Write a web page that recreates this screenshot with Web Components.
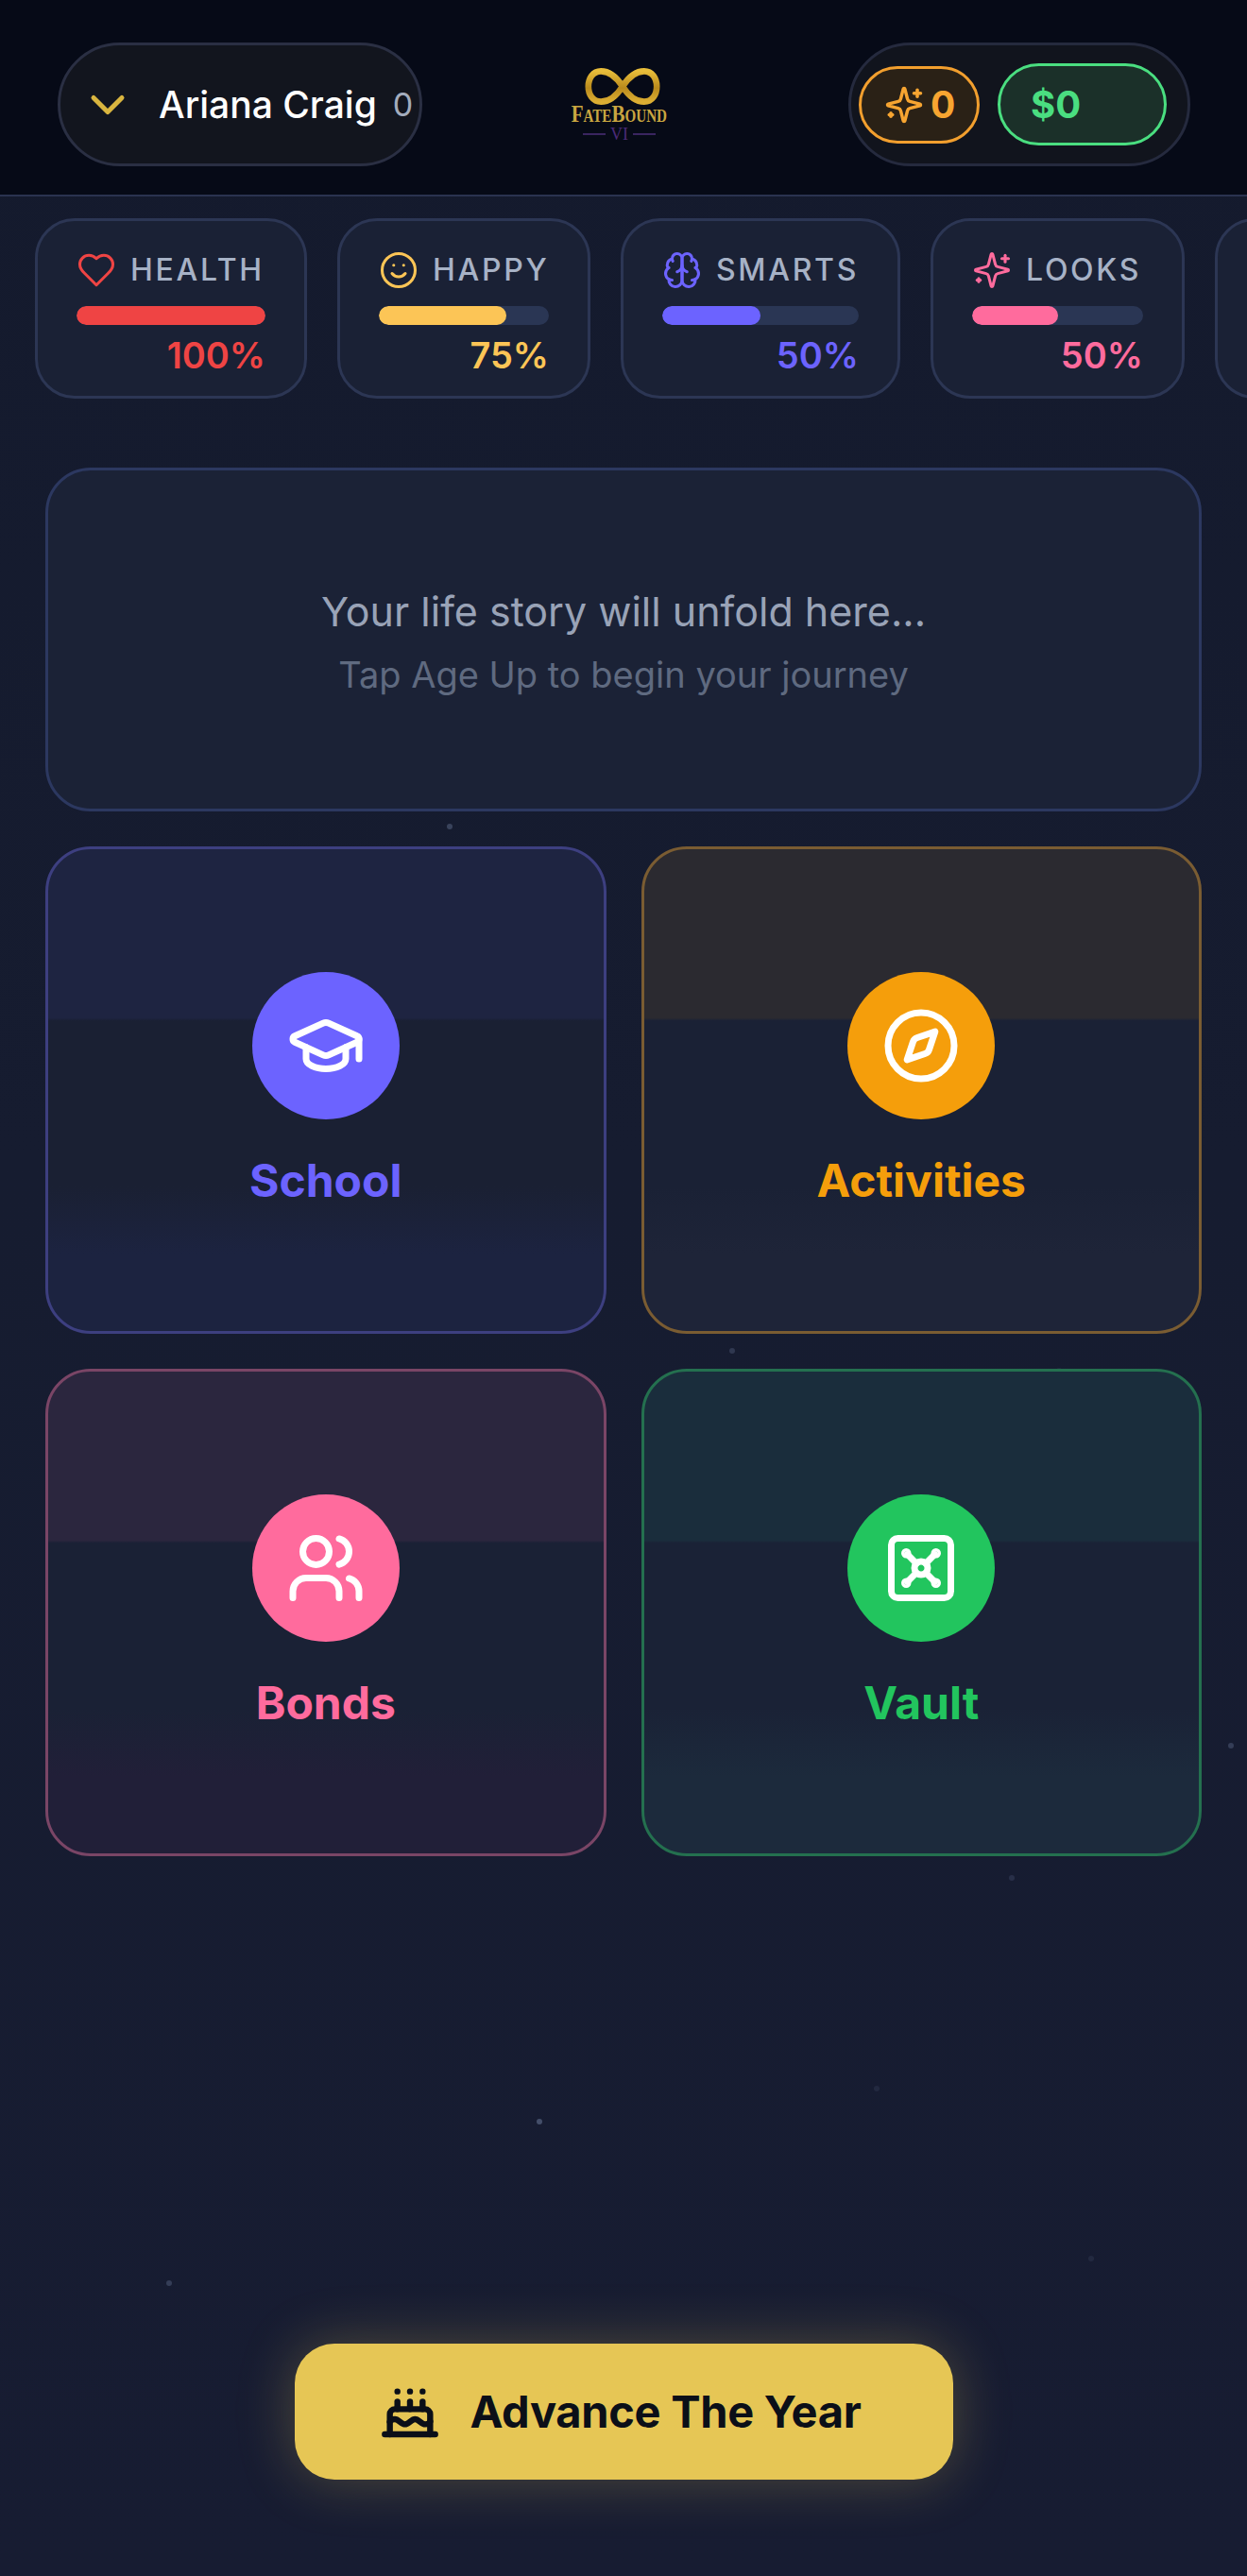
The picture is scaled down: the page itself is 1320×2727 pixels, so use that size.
<!DOCTYPE html>
<html lang="en"><head><meta charset="utf-8"><title>FateBound</title>
<style>
html,body{margin:0;padding:0;height:100%}
body{width:1320px;height:2727px;overflow:hidden;background:#161c30;font-family:Inter,"Liberation Sans",sans-serif;color:#fff}
</style></head><body>
<game-app>
  <star-field slot="stars"></star-field>
  <app-header slot="header"></app-header>
  <stat-row slot="stats">
    <stat-card label="HEALTH" value="100" pct="100" color="#ef4444" icon="heart" style="--w:288px"></stat-card>
    <stat-card label="HAPPY" value="75" pct="75" color="#fcc556" icon="smile" style="--w:268px"></stat-card>
    <stat-card label="SMARTS" value="50" pct="50" color="#6c63ff" icon="brain" style="--w:296px"></stat-card>
    <stat-card label="LOOKS" value="50" pct="50" color="#ff6b9d" icon="sparkles" style="--w:269px"></stat-card>
    <stat-card empty style="--w:268px"></stat-card>
  </stat-row>
  <story-card slot="story"></story-card>
  <action-grid slot="actions">
    <action-card label="School" icon="cap" color="#6c63ff" top="#1e2441" mid="#1a2033" bot="#1c2340" border="#3d3f80"></action-card>
    <action-card label="Activities" icon="compass" color="#f59e0b" top="#2b2a30" mid="#1a2135" bot="#1e2438" border="#7a5c32"></action-card>
    <action-card label="Bonds" icon="users" color="#ff6b9d" top="#2b263e" mid="#1a2135" bot="#211f38" border="#7a4566"></action-card>
    <action-card label="Vault" icon="vault" color="#22c55e" top="#1a2d3c" mid="#1a2236" bot="#1c2a3c" border="#24704f"></action-card>
  </action-grid>
  <advance-button slot="advance"></advance-button>
</game-app>
<script>
const ICONS={
heart:'<path d="M19 14c1.49-1.46 3-3.21 3-5.5A5.5 5.5 0 0 0 16.5 3c-1.76 0-3 .5-4.5 2-1.5-1.5-2.74-2-4.5-2A5.5 5.5 0 0 0 2 8.5c0 2.3 1.5 4.05 3 5.5l7 7Z"/>',
smile:'<circle cx="12" cy="12" r="10"/><path d="M8 14s1.5 2 4 2 4-2 4-2"/><path d="M9 9h.01"/><path d="M15 9h.01"/>',
brain:'<path d="M12 5a3 3 0 1 0-5.997.125 4 4 0 0 0-2.526 5.77 4 4 0 0 0 .556 6.588A4 4 0 1 0 12 18Z"/><path d="M12 5a3 3 0 1 1 5.997.125 4 4 0 0 1 2.526 5.77 4 4 0 0 1-.556 6.588A4 4 0 1 1 12 18Z"/><path d="M15 13a4.5 4.5 0 0 1-3-4 4.5 4.5 0 0 1-3 4"/><path d="M17.599 6.5a3 3 0 0 0 .399-1.375"/><path d="M6.003 5.125A3 3 0 0 0 6.401 6.5"/><path d="M3.477 10.896a4 4 0 0 1 .585-.396"/><path d="M19.938 10.5a4 4 0 0 1 .585.396"/><path d="M6 18a4 4 0 0 1-1.967-.516"/><path d="M19.967 17.484A4 4 0 0 1 18 18"/>',
sparkles:'<path d="M9.937 15.5A2 2 0 0 0 8.5 14.063l-6.135-1.582a.5.5 0 0 1 0-.962L8.5 9.936A2 2 0 0 0 9.937 8.5l1.582-6.135a.5.5 0 0 1 .963 0L14.063 8.5A2 2 0 0 0 15.5 9.937l6.135 1.581a.5.5 0 0 1 0 .964L15.5 14.063a2 2 0 0 0-1.437 1.437l-1.582 6.135a.5.5 0 0 1-.963 0z"/><path d="M20 3v4"/><path d="M22 5h-4"/><path d="M4 17v2"/><path d="M5 18H3"/>',
cap:'<path d="M21.42 10.922a1 1 0 0 0-.019-1.838L12.83 5.18a2 2 0 0 0-1.66 0L2.6 9.08a1 1 0 0 0 0 1.832l8.57 3.908a2 2 0 0 0 1.66 0z"/><path d="M22 10v6"/><path d="M6 12.5V16a6 3 0 0 0 12 0v-3.5"/>',
compass:'<circle cx="12" cy="12" r="10"/><path d="m16.24 7.76-1.804 5.411a2 2 0 0 1-1.265 1.265L7.76 16.24l1.804-5.411a2 2 0 0 1 1.265-1.265z"/>',
users:'<path d="M16 21v-2a4 4 0 0 0-4-4H6a4 4 0 0 0-4 4v2"/><circle cx="9" cy="7" r="4"/><path d="M22 21v-2a4 4 0 0 0-3-3.87"/><path d="M16 3.13a4 4 0 0 1 0 7.75"/>',
vault:'<rect width="18" height="18" x="3" y="3" rx="2"/><circle cx="7.5" cy="7.5" r=".5" fill="currentColor"/><path d="m7.9 7.9 2.7 2.7"/><circle cx="16.5" cy="7.5" r=".5" fill="currentColor"/><path d="m13.4 10.6 2.7-2.7"/><circle cx="7.5" cy="16.5" r=".5" fill="currentColor"/><path d="m7.9 16.1 2.7-2.7"/><circle cx="16.5" cy="16.5" r=".5" fill="currentColor"/><path d="m13.4 13.4 2.7 2.7"/><circle cx="12" cy="12" r="2"/>',
cake:'<path d="M20 21v-8a2 2 0 0 0-2-2H6a2 2 0 0 0-2 2v8"/><path d="M4 16s.5-1 2-1 2.5 2 4 2 2.5-2 4-2 2.5 2 4 2 2-1 2-1"/><path d="M2 21h20"/><path d="M7 8v3"/><path d="M12 8v3"/><path d="M17 8v3"/><path d="M7 4h.01"/><path d="M12 4h.01"/><path d="M17 4h.01"/>',
chevron:'<path d="m6 9 6 6 6-6"/>'
};
function def(name,html){
  customElements.define(name,class extends HTMLElement{
    connectedCallback(){
      if(this.shadowRoot)return;
      const r=this.attachShadow({mode:'open'});
      r.innerHTML=typeof html==='function'?html(this):html;
    }
  });
}
def('ui-icon',h=>{
  const s=h.getAttribute('size')||42, w=h.getAttribute('stroke')||2;
  return `<style>:host{display:inline-flex;flex:none;line-height:0}</style><svg xmlns="http://www.w3.org/2000/svg" width="${s}" height="${s}" viewBox="0 0 24 24" fill="none" stroke="currentColor" stroke-width="${w}" stroke-linecap="round" stroke-linejoin="round">${ICONS[h.getAttribute('name')]}</svg>`;
});
def('game-app',`<style>
:host{display:flex;flex-direction:column;position:relative;width:1320px;height:2727px;overflow:hidden;background:linear-gradient(180deg,#141a2d 0,#161c30 45%,#171c32 100%)}
.main{display:flex;flex-direction:column;flex:1;padding:73px 48px 102px;gap:37px;position:relative}
.foot{margin-top:auto;display:flex;justify-content:center}
</style><slot name="stars"></slot><slot name="header"></slot><slot name="stats"></slot>
<div class="main"><slot name="story"></slot><slot name="actions"></slot><div class="foot"><slot name="advance"></slot></div></div>`);
def('star-field',h=>{
  const d=[[473,872,.35],[580,985,.1],[1210,1008,.1],[772,1427,.25],[1118,1448,.1],[1300,1845,.3],[1068,1985,.18],[568,2243,.45],[176,2414,.3],[925,2208,.12],[1152,2388,.12]];
  return `<style>:host{position:absolute;inset:0;pointer-events:none;z-index:0}
  i{position:absolute;width:6px;height:6px;border-radius:50%;background:#7c8bb0}</style>`+d.map(p=>`<i style="left:${p[0]}px;top:${p[1]}px;opacity:${p[2]}"></i>`).join('');
});
def('app-logo',`<style>:host{display:flex;flex-direction:column;align-items:center;width:110px;height:80px;flex:none;margin-right:34px}
svg{display:block;flex:none;margin-left:6px}
.t{font:700 25px/20px "Liberation Serif",serif;font-variant:small-caps;color:#c9a640;white-space:nowrap;transform:scaleX(.84);margin-top:-1px}
.v{display:flex;align-items:center;gap:5px;color:#4b2a78;font:400 18px/20px "Liberation Serif",serif;margin-top:1px}
.v b{display:block;width:24px;height:2px;background:#3a2560}
</style>
<svg width="80" height="41" viewBox="0 0 84 42" fill="none"><defs><linearGradient id="g" x1="0" y1="0" x2="0" y2="1"><stop offset="0" stop-color="#e8bd3a"/><stop offset=".55" stop-color="#b98a1c"/><stop offset="1" stop-color="#dcae33"/></linearGradient></defs><path d="M42 21C35 10 28 4 18 4 9 4 4 12 4 21s5 17 14 17c10 0 17-6 24-17s14-17 24-17c9 0 14 8 14 17s-5 17-14 17C56 38 49 32 42 21Z" stroke="url(#g)" stroke-width="7"/></svg>
<div class="t">FateBound</div><div class="v"><b></b><span>VI</span><b></b></div>`);
def('name-pill',`<style>:host{display:flex;align-items:center;box-sizing:border-box;width:386px;height:131px;border:3px solid #2a2f43;border-radius:66px;background:#12151e;padding-left:20px;flex:none}
ui-icon{color:#d9b53f}
.n{margin-left:24px;font:500 39px/48px Inter,sans-serif;color:#fff;white-space:nowrap}
.c{margin-left:17px;font:400 34px/40px Inter,sans-serif;color:#a3acbd}
</style><ui-icon name="chevron" size="60" stroke="2"></ui-icon><span class="n">Ariana Craig</span><span class="c">0</span>`);
def('wallet-pill',`<style>:host{display:flex;align-items:center;box-sizing:border-box;width:362px;height:131px;border:3px solid #252a3e;border-radius:66px;background:#11141d;padding-left:8px;gap:19px;flex:none}
.b{display:flex;align-items:center;box-sizing:border-box;border-radius:50px;font:700 39px/48px Inter,sans-serif;white-space:nowrap}
.s{width:128px;height:82px;border:3px solid #f29f2e;background:#2a2116;color:#f7a531;padding-left:24px;gap:7px}
.d{width:179px;height:87px;border:3px solid #4ade80;background:#1b3029;color:#4ade80;padding-left:32px;font-size:40px}
</style><div class="b s"><ui-icon name="sparkles" size="42" stroke="2"></ui-icon><span>0</span></div><div class="b d"><span>$0</span></div>`);
def('app-header',`<style>:host{display:flex;align-items:center;justify-content:space-between;box-sizing:border-box;height:208px;padding:15px 60px 0 61px;background:#060a17;border-bottom:2px solid #2a3350;position:relative;z-index:1}</style>
<name-pill></name-pill><app-logo></app-logo><wallet-pill></wallet-pill>`);
def('stat-row',`<style>:host{display:flex;gap:32px;padding:23px 0 0 37px;position:relative;z-index:1;overflow:hidden}</style><slot></slot>`);
def('stat-card',h=>{
  if(h.hasAttribute('empty'))return `<style>:host{display:block;flex:none;box-sizing:border-box;width:var(--w);height:191px;border:3px solid #2c3654;border-radius:42px;background:#1a2135}</style>`;
  const c=h.getAttribute('color');
  return `<style>:host{display:flex;flex-direction:column;flex:none;box-sizing:border-box;width:var(--w);height:191px;border:3px solid #2c3654;border-radius:42px;background:#1a2135;padding:31px 41px 0}
  .r{display:flex;align-items:center;gap:15px;height:42px}
  ui-icon{color:${c}}
  .l{font:500 32px/42px Inter,sans-serif;letter-spacing:2.7px;color:#a7b2c6;white-space:nowrap}
  .t{height:20px;margin-top:17px;border-radius:10px;background:#2a3654;overflow:hidden}
  .f{height:100%;width:${h.getAttribute('pct')}%;background:${c};border-radius:10px}
  .v{margin-top:10px;text-align:right;font:600 38px/44px Inter,sans-serif;color:${c}}
  </style><div class="r"><ui-icon name="${h.getAttribute('icon')}" size="42" stroke="1.75"></ui-icon><span class="l">${h.getAttribute('label')}</span></div><div class="t"><div class="f"></div></div><div class="v">${h.getAttribute('value')}%</div>`;
});
def('story-card',`<style>:host{display:flex;flex-direction:column;align-items:center;justify-content:center;box-sizing:border-box;height:364px;border:3px solid #2c3860;border-radius:48px;background:#1b2236;text-align:center;position:relative;z-index:1}
.a{font:400 43px/68px Inter,sans-serif;color:#99a3b7}
.b{font:400 38px/56px Inter,sans-serif;color:#5f6a80;margin-top:5px}
</style><div class="a">Your life story will unfold here...</div><div class="b">Tap Age Up to begin your journey</div>`);
def('action-grid',`<style>:host{display:grid;grid-template-columns:1fr 1fr;grid-auto-rows:516px;gap:37px;position:relative;z-index:1}</style><slot></slot>`);
def('action-card',h=>{
  const c=h.getAttribute('color'),a=k=>h.getAttribute(k);
  return `<style>:host{display:flex;flex-direction:column;align-items:center;justify-content:center;box-sizing:border-box;border:3px solid ${a('border')};border-radius:48px;background:linear-gradient(180deg,${a('top')} 0,${a('top')} 35%,${a('mid')} 35.6%,${a('mid')} 70%,${a('bot')} 84%,${a('bot')} 100%);gap:35px}
  .c{width:156px;height:156px;border-radius:50%;background:${c};display:flex;align-items:center;justify-content:center;color:#fff}
  .l{font:700 48px/60px Inter,sans-serif;color:${c}}
  </style><div class="c"><ui-icon name="${a('icon')}" size="84" stroke="2"></ui-icon></div><div class="l">${a('label')}</div>`;
});
def('advance-button',`<style>:host{display:flex;align-items:center;justify-content:center;box-sizing:border-box;width:697px;height:144px;border-radius:42px;background:#e6c655;box-shadow:0 0 60px rgba(230,198,85,.28);color:#0b0f18;gap:31px;padding-right:6px;position:relative;z-index:1}
.t{font:700 47px/58px Inter,sans-serif;letter-spacing:-.3px;white-space:nowrap}
</style><ui-icon name="cake" size="64" stroke="2.4"></ui-icon><span class="t">Advance The Year</span>`);
</script>
</body></html>
